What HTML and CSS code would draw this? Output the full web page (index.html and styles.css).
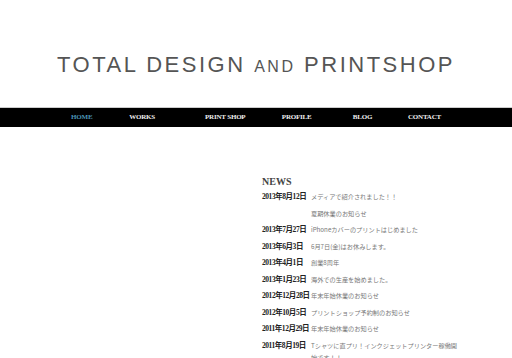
FILE: index.html
```html
<!DOCTYPE html>
<html lang="ja">
<head>
    <meta charset="UTF-8">
    <title>TOTAL DESIGN and PRINTSHOP</title>
    <link rel="stylesheet" href="styles.css">
</head>
<body>

    <!-- Header -->
    <header class="site-header">
        <h1 class="logo">TOTAL DESIGN <span class="small">AND</span> PRINTSHOP</h1>
    </header>

    <!-- Global nav -->
    <nav class="global-nav">
        <ul>
            <li class="nav-home current">HOME</li>
            <li class="nav-works">WORKS</li>
            <li class="nav-print">PRINT SHOP</li>
            <li class="nav-profile">PROFILE</li>
            <li class="nav-blog">BLOG</li>
            <li class="nav-contact">CONTACT</li>
        </ul>
    </nav>

    <!-- News -->
    <div class="content">
        <div class="news">
            <h2>NEWS</h2>
            <dl>
                <dt>2013年8月12日</dt><dd>メディアで紹介されました！！</dd>
                <dt></dt><dd>夏期休業のお知らせ</dd>
                <dt>2013年7月27日</dt><dd>iPhoneカバーのプリントはじめました</dd>
                <dt>2013年6月3日</dt><dd>6月7日(金)はお休みします。</dd>
                <dt>2013年4月1日</dt><dd>創業8周年</dd>
                <dt>2013年1月23日</dt><dd>海外での生産を始めました。</dd>
                <dt>2012年12月28日</dt><dd>年末年始休業のお知らせ</dd>
                <dt>2012年10月5日</dt><dd>プリントショップ予約制のお知らせ</dd>
                <dt>2011年12月29日</dt><dd>年末年始休業のお知らせ</dd>
                <dt>2011年8月19日</dt><dd>Tシャツに直プリ！インクジェットプリンター稼働開始です！！</dd>
            </dl>
        </div>
    </div>

</body>
</html>
```

FILE: styles.css
```css
/* Basic Reset */
* {
    margin: 0;
    padding: 0;
    box-sizing: border-box;
}

body {
    background-color: #fff;
    color: #333;
    font-family: "Liberation Serif", "Noto Sans CJK JP", serif;
}

/* Header */
.site-header {
    height: 107px;
    padding-top: 51px;
    text-align: center;
}

.logo {
    font-family: "Liberation Sans", Arial, sans-serif;
    font-weight: normal;
    font-size: 22px;
    line-height: 28px;
    letter-spacing: 2.5px;
    color: #555;
}

.logo .small {
    font-size: 16px;
}

/* Global nav */
.global-nav {
    border-top: 1px solid #ccc;
    background-color: #000;
    height: 20px;
}

.global-nav ul {
    list-style: none;
    display: flex;
    width: 370px;
    margin: 0 auto;
}

.global-nav li {
    color: #eee;
    font-size: 7px;
    font-weight: bold;
    letter-spacing: -0.2px;
    line-height: 19px;
}

.global-nav li.current {
    color: #4a93b5;
}

.nav-home { width: 59px; }
.nav-works { width: 77px; }
.nav-print { width: 78px; }
.nav-profile { width: 72px; }
.nav-blog { width: 56px; }

/* News */
.content {
    padding: 48px 0 0 262px;
}

.news {
    width: 196px;
}

.news h2 {
    font-size: 10px;
    font-weight: bold;
    color: #444;
    line-height: 14px;
    margin-bottom: 2px;
}

.news dl {
    display: grid;
    grid-template-columns: 49px 1fr;
    row-gap: 4px;
}

.news dt {
    font-size: 7.5px;
    font-weight: bold;
    letter-spacing: -0.45px;
    color: #222;
    line-height: 12.5px;
    white-space: nowrap;
}

.news dd {
    font-family: "Noto Sans CJK JP", sans-serif;
    font-size: 6.2px;
    color: #777;
    line-height: 12.5px;
}
```
